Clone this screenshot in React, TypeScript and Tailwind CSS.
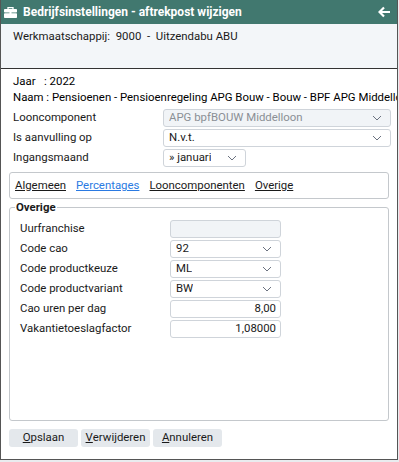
import * as React from 'react';

const Chevron = () => (
  <svg width="10" height="6" viewBox="0 0 10 6" className="shrink-0">
    <path d="M1 1 L5 5 L9 1" fill="none" stroke="#6b7280" strokeWidth="1" />
  </svg>
);

type SelectProps = { value: string; width: string; disabled?: boolean };

const Select = ({ value, width, disabled }: SelectProps) => (
  <div
    className={`flex h-[18px] items-center justify-between rounded-[3px] border border-[#cfd4da] pl-[5px] pr-[8px] ${width} ${
      disabled ? 'bg-[#f1f4f7] text-[#8a8f95]' : 'bg-white text-[#1a1a1a]'
    }`}
  >
    <span className="truncate">{value}</span>
    <Chevron />
  </div>
);

const Input = ({ value, disabled }: { value?: string; disabled?: boolean }) => (
  <div
    className={`flex h-[18px] w-[111px] items-center justify-end rounded-[3px] border border-[#cfd4da] px-[4px] ${
      disabled ? 'bg-[#f1f4f7]' : 'bg-white'
    }`}
  >
    {value}
  </div>
);

const Row = ({ label, children }: { label: string; children: React.ReactNode }) => (
  <div className="flex h-[18px] items-center">
    <div className="w-[150px] shrink-0">{label}</div>
    {children}
  </div>
);

export default function App() {
  return (
    <div
      className="h-[462px] w-[399px] bg-[#e9ecef] text-[11.4px] text-[#1a1a1a]"
      style={{ fontFamily: 'Roboto, "Liberation Sans", sans-serif' }}
    >
      <div className="flex h-[460px] w-[398px] flex-col border-x border-b border-[#555]">
        {/* title bar */}
        <div className="flex h-[24px] shrink-0 items-center justify-between bg-[#41786f] pl-[3px] pr-[6px] text-white">
          <div className="flex items-center gap-[6px]">
            <svg width="13" height="11" viewBox="0 0 13 11">
              <path d="M4 2 V0.5 H9 V2" fill="none" stroke="white" strokeWidth="1.3" />
              <rect x="0" y="2" width="13" height="3.5" rx="0.8" fill="white" />
              <rect x="0" y="6.3" width="13" height="4.7" rx="0.8" fill="white" />
              <rect x="5.5" y="4.5" width="2" height="2.6" fill="white" />
            </svg>
            <span className="text-[12px] font-bold">Bedrijfsinstellingen - aftrekpost wijzigen</span>
          </div>
          <svg width="13" height="12" viewBox="0 0 13 12">
            <path d="M12 6 H2 M6 1.5 L1.5 6 L6 10.5" fill="none" stroke="white" strokeWidth="2.2" />
          </svg>
        </div>

        {/* company band */}
        <div className="h-[44px] shrink-0 whitespace-pre bg-[#f3f6f9] pl-[12px] pt-[4px] leading-[16px]">
          {'Werkmaatschappij:  9000  -  Uitzendabu ABU'}
        </div>

        {/* content */}
        <div className="flex flex-1 flex-col overflow-hidden border-t border-[#333] bg-white">
          <div className="whitespace-pre pl-[12px] pt-[4px] leading-[16px] text-black">
            <div>{'Jaar   : 2022'}</div>
            <div className="whitespace-nowrap">Naam : Pensioenen - Pensioenregeling APG Bouw - Bouw - BPF APG Middelloon</div>
          </div>

          <div className="mt-[4px] flex flex-col gap-[2px] pl-[12px]">
            <Row label="Looncomponent">
              <Select value="APG bpfBOUW Middelloon" width="w-[228px]" disabled />
            </Row>
            <Row label="Is aanvulling op">
              <Select value="N.v.t." width="w-[228px]" />
            </Row>
            <Row label="Ingangsmaand">
              <Select value="» januari" width="w-[83px]" />
            </Row>
          </div>

          <div className="mx-[8px] mt-[5px] flex h-[27px] shrink-0 items-center gap-[10px] rounded-[3px] border border-[#c4c8cc] px-[5px]">
            <span className="underline">Algemeen</span>
            <span className="text-[#2a7ae2] underline">Percentages</span>
            <span className="underline">Looncomponenten</span>
            <span className="underline">Overige</span>
          </div>

          <fieldset className="mx-[8px] mt-[1px] h-[221px] shrink-0 rounded-[3px] border border-[#c4c8cc] px-[10px]">
            <legend className="-ml-[5px] px-[1px] font-bold leading-[15px]">Overige</legend>
            <div className="mt-[5px] flex flex-col gap-[2px]">
              <Row label="Uurfranchise">
                <Input disabled />
              </Row>
              <Row label="Code cao">
                <Select value="92" width="w-[111px]" />
              </Row>
              <Row label="Code productkeuze">
                <Select value="ML" width="w-[111px]" />
              </Row>
              <Row label="Code productvariant">
                <Select value="BW" width="w-[111px]" />
              </Row>
              <Row label="Cao uren per dag">
                <Input value="8,00" />
              </Row>
              <Row label="Vakantietoeslagfactor">
                <Input value="1,08000" />
              </Row>
            </div>
          </fieldset>

          <div className="ml-[8px] mt-[8px] flex gap-[3px]">
            {[
              ['O', 'pslaan'],
              ['V', 'erwijderen'],
              ['A', 'nnuleren'],
            ].map(([k, rest]) => (
              <div
                key={k}
                className="flex h-[18px] w-[69px] items-center justify-center rounded-[3px] bg-[#e4e8ec]"
              >
                <span className="underline">{k}</span>
                {rest}
              </div>
            ))}
          </div>
        </div>
      </div>
    </div>
  );
}
